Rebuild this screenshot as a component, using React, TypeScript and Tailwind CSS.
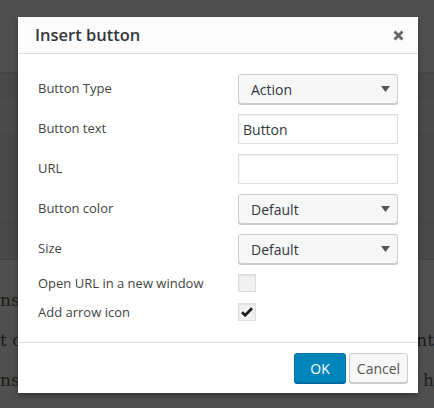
import React from 'react';

const ui = { fontFamily: '"Open Sans", "Noto Sans", sans-serif' };
const serif = { fontFamily: '"DejaVu Serif", "Liberation Serif", serif' };

function Arrow() {
  return (
    <svg width="9" height="6" viewBox="0 0 9 6" className="shrink-0">
      <path d="M0 0h9L4.5 6z" fill="#555" />
    </svg>
  );
}

function Select({ value }: { value: string }) {
  return (
    <div className="flex h-[30px] w-[160px] items-center justify-between rounded-[3px] border border-[#ccc] bg-[#f7f7f7] pl-[12px] pr-[7px] text-[14px] text-[#32373c] shadow-[0_1px_0_#ccc]">
      <span>{value}</span>
      <Arrow />
    </div>
  );
}

function Input({ value }: { value?: string }) {
  return (
    <div className="flex h-[30px] w-[160px] items-center border border-[#ddd] bg-white px-[4px] text-[14px] text-[#32373c] shadow-[inset_0_1px_2px_rgba(0,0,0,0.07)]">
      {value}
    </div>
  );
}

function Check({ checked }: { checked?: boolean }) {
  return (
    <div className="flex h-[18px] w-[18px] items-center justify-center border border-[#ddd] bg-[#f1f1f1] shadow-[inset_0_1px_2px_rgba(0,0,0,0.07)]">
      {checked && (
        <svg width="12" height="10" viewBox="0 0 12 10">
          <path d="M1 5.2l3.2 3L11 1.2" fill="none" stroke="#1e1e1e" strokeWidth="2.8" />
        </svg>
      )}
    </div>
  );
}

const rows: { label: string; control: React.ReactNode }[] = [
  { label: 'Button Type', control: <Select value="Action" /> },
  { label: 'Button text', control: <Input value="Button" /> },
  { label: 'URL', control: <Input /> },
  { label: 'Button color', control: <Select value="Default" /> },
  { label: 'Size', control: <Select value="Default" /> },
];

export default function App() {
  return (
    <div className="relative h-[408px] w-[434px] overflow-hidden bg-[#4f4f4f]">
      {/* editor behind the overlay */}
      <div className="flex flex-col">
        <div className="h-[73px] border-b border-[#434343] bg-[#4f4f4f]" />
        <div className="h-[25px] border-b border-[#434343] bg-[#484848]" />
        <div className="h-[37px] border-b border-[#434343] bg-[#4a4a4a]" />
        <div className="h-[88px] border-b border-[#434343] bg-[#484848]" />
        <div className="h-[37px] border-b border-[#434343] bg-[#484848]" />
        <div className="flex flex-col gap-[16px] pt-[28px] text-[17px] leading-[24px] text-[#1c1c1c]" style={serif}>
          <div className="flex justify-between whitespace-nowrap">
            <span>nse</span>
          </div>
          <div className="flex justify-between whitespace-nowrap">
            <span>t co</span>
            <span>nt</span>
          </div>
          <div className="flex justify-between whitespace-nowrap">
            <span>nse</span>
            <span>t h</span>
          </div>
        </div>
      </div>

      {/* dialog */}
      <div
        className="absolute left-[18px] top-[17px] flex h-[376px] w-[400px] flex-col bg-white shadow-[0_3px_6px_rgba(0,0,0,0.3)]"
        style={ui}
      >
        <div className="flex h-[37px] shrink-0 items-center justify-between border-b border-[#ddd] bg-[#fcfcfc] pl-[17px] pr-[14px]">
          <span className="text-[16.5px] font-semibold text-[#32373c]">Insert button</span>
          <svg width="11" height="11" viewBox="0 0 11 11">
            <path d="M1.5 1.5l8 8M9.5 1.5l-8 8" stroke="#666" strokeWidth="2.8" />
          </svg>
        </div>

        <div className="flex flex-1 flex-col gap-[10px] px-[20px] pt-[20px] text-[13px] text-[#444]">
          {rows.map((r) => (
            <div key={r.label} className="flex items-center justify-between">
              <span>{r.label}</span>
              {r.control}
            </div>
          ))}
          <div className="flex flex-col gap-[11px] leading-[18px]">
            <div className="flex h-[18px] items-center">
              <span className="w-[200px]">Open URL in a new window</span>
              <Check />
            </div>
            <div className="flex h-[18px] items-center">
              <span className="w-[200px]">Add arrow icon</span>
              <Check checked />
            </div>
          </div>
        </div>

        <div className="flex h-[51px] shrink-0 items-center justify-end gap-[3px] border-t border-[#ddd] px-[10px]">
          <div className="flex h-[30px] w-[52px] items-center justify-center rounded-[3px] border border-[#0073aa] bg-[#0085ba] text-[14px] text-white shadow-[0_1px_0_#006799]">
            OK
          </div>
          <div className="flex h-[30px] w-[59px] items-center justify-center rounded-[3px] border border-[#ccc] bg-[#f7f7f7] text-[14px] text-[#555] shadow-[0_1px_0_#ccc]">
            Cancel
          </div>
        </div>
      </div>
    </div>
  );
}
